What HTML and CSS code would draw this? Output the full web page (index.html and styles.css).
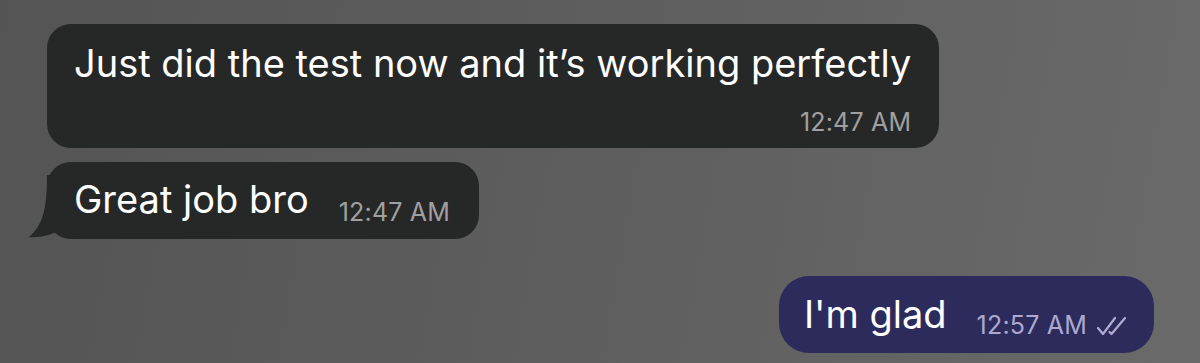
FILE: index.html
```html
<!DOCTYPE html>
<html lang="en">
<head>
  <meta charset="UTF-8">
  <title>Chat</title>
  <link rel="stylesheet" href="styles.css">
</head>
<body>
  <div class="chat">
    <div class="row in">
      <div class="bubble in-dark stacked">
        <div class="text">Just did the test now and it’s working perfectly</div>
        <div class="time">12:47 AM</div>
      </div>
    </div>

    <div class="row in">
      <div class="bubble in-dark inline has-tail">
        <svg class="tail" width="50" height="64" viewBox="0 0 50 64">
          <path d="M18,0 C18,34 14,50 0,62 C11,63 22,60 31,55 C36,59 42,62 50,62 L50,0 Z" fill="#262727"/>
        </svg>
        <div class="text">Great job bro</div>
        <div class="time">12:47 AM</div>
      </div>
    </div>

    <div class="row out">
      <div class="bubble out-purple inline">
        <div class="text">I'm glad</div>
        <div class="time">12:57 AM</div>
        <svg class="checks" width="32" height="22" viewBox="0 0 32 22">
          <path d="M2,13 L7,19 L19,3" fill="none" stroke="#aeacd2" stroke-width="2.2" stroke-linecap="round" stroke-linejoin="round"/>
          <path d="M13.5,17 L15.5,19 L29,3" fill="none" stroke="#aeacd2" stroke-width="2.2" stroke-linecap="round" stroke-linejoin="round"/>
        </svg>
      </div>
    </div>
  </div>
</body>
</html>
```

FILE: styles.css
```css
body {
  margin: 0;
  height: 363px;
  overflow: hidden;
  font-family: Inter, "Noto Sans", sans-serif;
  background: linear-gradient(100deg, #545454 0%, #5e5e5e 50%, #6a6a6a 100%);
}
.chat {
  display: flex;
  flex-direction: column;
  padding: 24px 46px 0 47px;
}
.row {
  display: flex;
}
.row.out {
  justify-content: flex-end;
  margin-top: 37px;
}
.row.in + .row.in {
  margin-top: 14px;
}
.bubble {
  position: relative;
  z-index: 0;
  border-radius: 24px;
  color: #fff;
}
.in-dark {
  background: #262727;
}
.out-purple {
  background: #2d2a5c;
  border-radius: 30px;
}
.text {
  font-size: 38px;
  line-height: 46px;
}
.time {
  font-size: 25px;
  line-height: 30px;
  letter-spacing: 0.2px;
  color: #a0a0a0;
  white-space: nowrap;
}
.out-purple .time {
  color: #aba9cf;
}
.stacked {
  padding: 16px 28px 11px 27px;
}
.stacked .time {
  text-align: right;
  margin-top: 21px;
}
.inline {
  display: flex;
  align-items: flex-end;
  height: 77px;
  box-sizing: border-box;
  padding: 14px 29px 17px 27px;
}
.inline .time {
  margin-left: 30px;
  margin-bottom: -5px;
}
.out-purple.inline {
  padding: 15px 26px 16px 25px;
}
.out-purple .time {
  margin-bottom: -3px;
}
.checks {
  margin-left: 9px;
  margin-bottom: 0;
}
.tail {
  position: absolute;
  z-index: -1;
  left: -18px;
  bottom: 0;
}
```
